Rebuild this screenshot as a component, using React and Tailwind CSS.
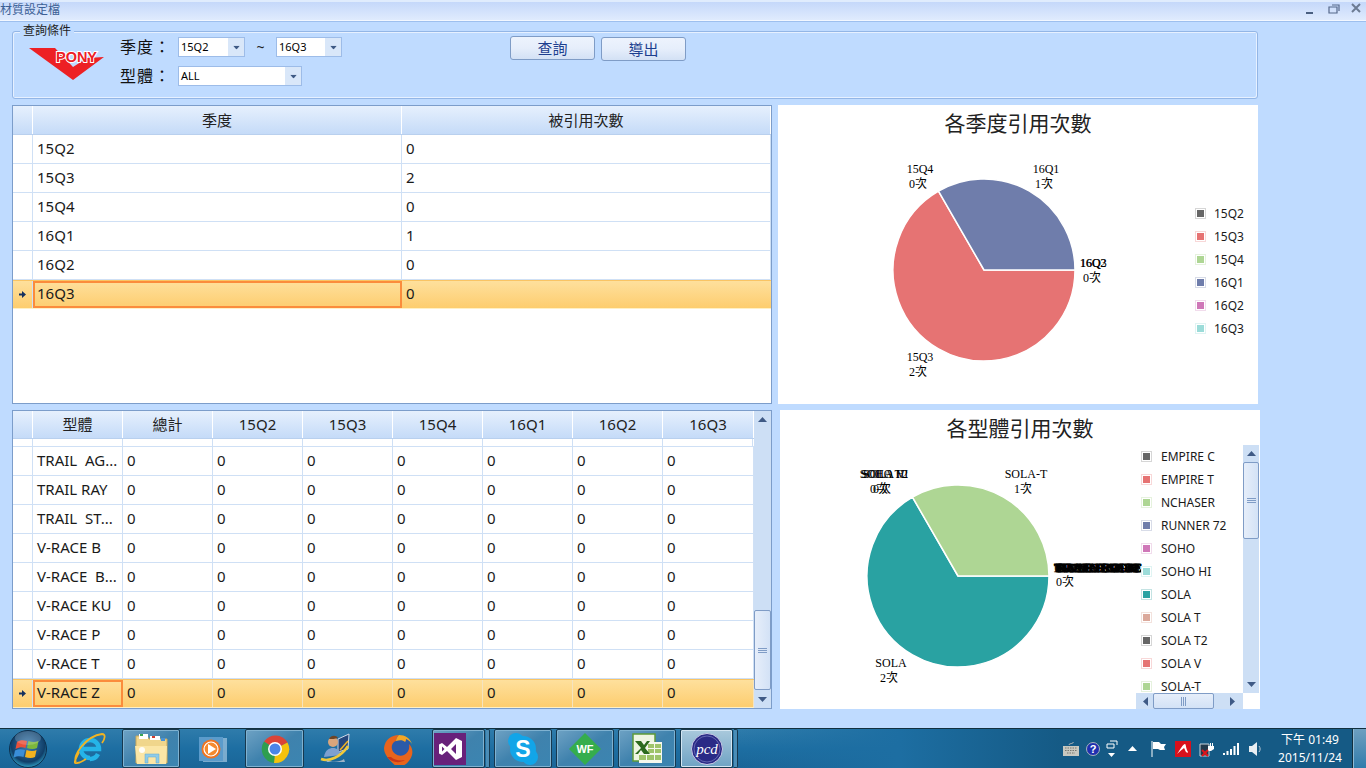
const QUARTERS = ["15Q2", "15Q3", "15Q4", "16Q1", "16Q2", "16Q3"];

const QUARTER_ROWS = [
  ["15Q2", 0],
  ["15Q3", 2],
  ["15Q4", 0],
  ["16Q1", 1],
  ["16Q2", 0],
];

const MODEL_ROWS = ["TRAIL  AG...", "TRAIL RAY", "TRAIL  ST...", "V-RACE B", "V-RACE  B...", "V-RACE KU", "V-RACE P", "V-RACE T"];

const SWATCHES = [
  { box: "border-[#d6d6d6]", fill: "bg-[#666666]" },
  { box: "border-[#f8d8d8]", fill: "bg-[#e67373]" },
  { box: "border-[#e6f2de]", fill: "bg-[#aed694]" },
  { box: "border-[#d8dce8]", fill: "bg-[#6f7dab]" },
  { box: "border-[#f1dcec]", fill: "bg-[#cf77b8]" },
  { box: "border-[#e0f4f3]", fill: "bg-[#9cdcd9]" },
  { box: "border-[#c4e3e3]", fill: "bg-[#29a2a2]" },
  { box: "border-[#f3e2dd]", fill: "bg-[#dba99b]" },
];

const MODEL_LEGEND = ["EMPIRE C", "EMPIRE T", "NCHASER", "RUNNER 72", "SOHO", "SOHO HI", "SOLA", "SOLA T", "SOLA T2", "SOLA V", "SOLA-T"];

const PILE_LABELS = ["EMPIRE C", "RUNNER 72", "NCHASER", "TRAIL AGILE", "TRAIL STORM", "V-RACE BLAZE", "ULTIMATE ZONE"];

const label = "font-['Liberation_Serif','Noto_Sans_CJK_TC',serif] text-[12px] fill-black";
const headerBg = "bg-gradient-to-b from-[#e6f0fd] to-[#c5dbf8]";
const selectedBg = "bg-gradient-to-b from-[#fee09c] to-[#fdcd6e]";

function ArrowDown({ className = "" }) {
  return (
    <svg width="9" height="5" viewBox="0 0 9 5" className={className}>
      <path d="M0 0h9L4.5 5z" fill="#3f5a85" />
    </svg>
  );
}

function Combo({ value, width }) {
  return (
    <div className={`flex h-[20px] items-center border border-[#9dbce8] bg-white ${width}`}>
      <span className="flex-1 pl-[2px] text-[11px] text-black">{value}</span>
      <span className="flex h-full w-[16px] items-center justify-center bg-[#d9e7f9]">
        <ArrowDown className="scale-75" />
      </span>
    </div>
  );
}

function FormLabel({ children }) {
  return <span className="w-[58px] text-[16px] leading-none tracking-[1px] text-[#111]">{children}</span>;
}

function PonyLogo() {
  return (
    <svg width="76" height="36" viewBox="0 0 76 36">
      <path d="M0 1h26l18 19 14-9 17-1-31 23z" fill="#ed2024" />
      <text x="27" y="15" textLength="41" lengthAdjust="spacingAndGlyphs" className="font-['Liberation_Sans',sans-serif] text-[15px] font-bold" fill="#ed2024" stroke="#fff" strokeWidth="2" paintOrder="stroke">
        PONY
      </text>
    </svg>
  );
}

function QueryButton({ children, className = "" }) {
  return (
    <button className={`h-[24px] w-[85px] rounded-[3px] border border-[#7f9cc6] bg-gradient-to-b from-[#edf3fd] via-[#e6eefb] to-[#d3e1f5] text-[15px] leading-none text-[#1d3f8f] ${className}`}>
      {children}
    </button>
  );
}

function QueryPanel() {
  return (
    <div className="relative flex h-[68px] w-[1246px] rounded-[3px] border border-[#93b6e6] shadow-[inset_-1px_-1px_0_#e6f0ff,inset_1px_1px_0_#e6f0ff]">
      <span className="absolute left-[7px] top-[-8px] bg-[#bfdbff] px-[3px] text-[12px] leading-[14px] text-[#222]">查詢條件</span>
      <div className="ml-[16px] mt-[15px] w-[91px]">
        <PonyLogo />
      </div>
      <div className="mt-[5px] flex w-[390px] flex-col gap-[9px]">
        <div className="flex items-center">
          <FormLabel>季度：</FormLabel>
          <Combo value="15Q2" width="w-[67px]" />
          <span className="w-[31px] text-center text-[14px] leading-none text-[#222]">~</span>
          <Combo value="16Q3" width="w-[66px]" />
        </div>
        <div className="flex items-center">
          <FormLabel>型體：</FormLabel>
          <Combo value="ALL" width="w-[124px]" />
        </div>
      </div>
      <div className="mt-[4px] flex items-start gap-[6px]">
        <QueryButton>查詢</QueryButton>
        <QueryButton className="mt-[1px]">導出</QueryButton>
      </div>
    </div>
  );
}

function RowMarker({ active }) {
  return (
    <div className={`flex h-full w-[20px] shrink-0 items-center justify-center border-r border-[#cfe0f5] ${active ? "" : "bg-white"}`}>
      {active && (
        <svg width="7" height="7" viewBox="0 0 7 7">
          <path d="M0 2.5h3V0l4 3.5L3 7V4.500H0z" fill="#15315f" />
        </svg>
      )}
    </div>
  );
}

function HeadCell({ children, className = "" }) {
  return (
    <div className={`flex h-full items-center justify-center border-r border-white text-[15px] text-[#222] ${headerBg} ${className}`}>
      {children}
    </div>
  );
}

function Cell({ children, className = "", active }) {
  const look = active ? "border-2 border-[#fb8c3c] pl-[2px]" : "border-r border-[#cfe0f5] pl-[4px]";
  return (
    <div className={`flex h-full items-center overflow-hidden whitespace-pre pb-[2px] text-[15px] text-[#1a1a1a] ${look} ${className}`}>
      {children}
    </div>
  );
}

function QuarterGrid() {
  return (
    <div className="h-[299px] w-[760px] border border-[#7c9dca] bg-white">
      <div className="flex h-[29px] border-b border-[#b9d0ee]">
        <HeadCell className="w-[20px]" />
        <HeadCell className="w-[369px]">季度</HeadCell>
        <HeadCell className="flex-1">被引用次數</HeadCell>
      </div>
      {QUARTER_ROWS.map(([q, n]) => (
        <div key={q} className="flex h-[29px] border-b border-[#cfe0f5]">
          <RowMarker />
          <Cell className="w-[369px]">{q}</Cell>
          <Cell className="flex-1">{n}</Cell>
        </div>
      ))}
      <div className={`flex h-[29px] border-b border-t border-b-[#fff0c4] border-t-[#f9c464] ${selectedBg}`}>
        <RowMarker active />
        <Cell active className="w-[369px]">16Q3</Cell>
        <Cell className="flex-1 border-r-0">0</Cell>
      </div>
    </div>
  );
}

function GripLines({ vertical }) {
  return (
    <svg width="9" height="9" viewBox="0 0 9 9">
      {vertical ? (
        <path d="M2.500 0v9M4.500 0v9M6.500 0v9" stroke="#7f9cc6" />
      ) : (
        <path d="M0 2.500h9M0 4.500h9M0 6.500h9" stroke="#7f9cc6" />
      )}
    </svg>
  );
}

function ModelGrid() {
  const quarterCols = QUARTERS.map((q, i) => (
    <HeadCell key={q} className={i === 5 ? "w-[91px]" : "w-[90px]"}>{q}</HeadCell>
  ));
  const zeroes = (active) => ["總計", ...QUARTERS].map((c, i) => (
    <Cell key={c} className={`${i === 6 ? "w-[91px]" : "w-[90px]"} ${active ? "border-r-[#f4e3c0]" : ""}`}>0</Cell>
  ));

  return (
    <div className="flex h-[299px] w-[760px] border border-[#7c9dca] bg-white">
      <div className="w-[741px]">
        <div className="flex h-[28px] border-b border-[#b9d0ee]">
          <HeadCell className="w-[20px]" />
          <HeadCell className="w-[90px]">型體</HeadCell>
          <HeadCell className="w-[90px]">總計</HeadCell>
          {quarterCols}
        </div>
        <div className="flex h-[8px] border-b border-[#cfe0f5]">
          <RowMarker />
          {[0, 1, 2, 3, 4, 5, 6, 7].map((i) => (
            <div key={i} className="w-[90px] border-r border-[#cfe0f5]" />
          ))}
        </div>
        {MODEL_ROWS.map((name) => (
          <div key={name} className="flex h-[29px] border-b border-[#cfe0f5]">
            <RowMarker />
            <Cell className="w-[90px]">{name}</Cell>
            {zeroes(false)}
          </div>
        ))}
        <div className={`flex h-[29px] border-b border-t border-b-[#fff0c4] border-t-[#f9c464] ${selectedBg}`}>
          <RowMarker active />
          <Cell active className="w-[90px]">V-RACE Z</Cell>
          {zeroes(true)}
        </div>
      </div>
      <div className="flex w-[17px] flex-col items-center bg-[#cddff5]">
        <div className="flex h-[16px] items-center">
          <ArrowDown className="rotate-180" />
        </div>
        <div className="flex-1" />
        <div className="flex h-[80px] w-[17px] items-center justify-center rounded-[2px] border border-[#7f9cc6] bg-gradient-to-r from-[#e6eefa] to-[#d3e2f6]">
          <GripLines />
        </div>
        <div className="flex h-[18px] items-center">
          <ArrowDown />
        </div>
      </div>
    </div>
  );
}

function Legend({ items, className = "", textGap = "ml-[8px]" }) {
  return (
    <div className={className}>
      {items.map((name, i) => {
        const s = SWATCHES[i % SWATCHES.length];
        return (
          <div key={name} className="flex h-[23px] items-center">
            <span className={`flex h-[11px] w-[11px] shrink-0 items-center justify-center border bg-white ${s.box}`}>
              <span className={`h-[7px] w-[7px] ${s.fill}`} />
            </span>
            <span className={`whitespace-nowrap text-[12px] text-[#1a1a1a] ${textGap}`}>{name}</span>
          </div>
        );
      })}
    </div>
  );
}

function Pie({ cx, cy, big, small }) {
  return (
    <g stroke="#fff" strokeWidth="1.500">
      <path d={`M${cx} ${cy}L${cx + 91} ${cy}A91 91 0 1 1 ${cx - 45.500} ${cy - 78.800}Z`} fill={big} />
      <path d={`M${cx} ${cy}L${cx - 45.500} ${cy - 78.800}A91 91 0 0 1 ${cx + 91} ${cy}Z`} fill={small} />
    </g>
  );
}

function QuarterChart() {
  return (
    <div className="ml-[6px] h-[299px] w-[480px] bg-white">
      <div className="flex h-[35px] items-center justify-center pt-[2px] text-[21px] text-[#222]">各季度引用次數</div>
      <div className="flex">
        <svg width="400" height="264" viewBox="0 0 400 264">
          <Pie cx={206} cy={130} big="#e67373" small="#6f7dab" />
          <g textAnchor="middle" className={label}>
            <text x="142" y="33">15Q4</text>
            <text x="140" y="48">0次</text>
            <text x="268" y="33">16Q1</text>
            <text x="266" y="48">1次</text>
            <text x="315" y="127">16Q2</text>
            <text x="315.500" y="127">16Q3</text>
            <text x="314" y="142">0次</text>
            <text x="142" y="221">15Q3</text>
            <text x="140" y="236">2次</text>
          </g>
        </svg>
        <Legend items={QUARTERS} className="pl-[17px] pt-[62px]" />
      </div>
    </div>
  );
}

function ModelChart() {
  return (
    <div className="ml-[8px] h-[299px] w-[480px] bg-white">
      <div className="flex h-[35px] items-center justify-center pt-[2px] text-[21px] text-[#222]">各型體引用次數</div>
      <div className="flex">
        <svg width="356" height="264" viewBox="0 0 356 264" className="overflow-visible">
          <Pie cx={178} cy={131} big="#29a2a2" small="#aed694" />
          <g textAnchor="middle" className={label}>
            <text x="104" y="33">SOHO HI</text>
            <text x="104" y="33">SOLA V</text>
            <text x="104.500" y="33">SOLA T2</text>
            <text x="99" y="48">0次</text>
            <text x="102" y="48">0次</text>
            <text x="246" y="33">SOLA-T</text>
            <text x="243" y="48">1次</text>
            <text x="111" y="222">SOLA</text>
            <text x="109" y="237">2次</text>
            {PILE_LABELS.map((name, i) => (
              <text key={name} x={318} y="127" textLength={88 - (i % 3) * 4} lengthAdjust="spacingAndGlyphs" stroke="#000" strokeWidth="0.500">{name}</text>
            ))}
            <text x="285" y="141">0次</text>
          </g>
        </svg>
        <div className="w-[107px]">
          <Legend items={MODEL_LEGEND} className="h-[248px] overflow-hidden pl-[5px]" textGap="ml-[9px]" />
          <div className="flex h-[16px] items-center bg-[#cddff5]">
            <ArrowDown className="ml-[5px] rotate-90" />
            <div className="ml-[3px] flex h-[16px] w-[61px] items-center justify-center rounded-[2px] border border-[#7f9cc6] bg-gradient-to-b from-[#e6eefa] to-[#d3e2f6]">
              <GripLines vertical />
            </div>
            <ArrowDown className="ml-[14px] -rotate-90" />
          </div>
        </div>
        <div className="flex h-[248px] w-[16px] flex-col items-center bg-[#cddff5]">
          <div className="flex h-[17px] items-center">
            <ArrowDown className="rotate-180" />
          </div>
          <div className="flex h-[77px] w-[16px] items-center justify-center rounded-[2px] border border-[#7f9cc6] bg-gradient-to-r from-[#e6eefa] to-[#d3e2f6]">
            <GripLines />
          </div>
          <div className="flex-1" />
          <div className="flex h-[18px] items-center">
            <ArrowDown />
          </div>
        </div>
      </div>
    </div>
  );
}

function TitleBar() {
  return (
    <div className="flex h-[21px] items-center border-b border-t-2 border-b-[#f2f7ff] border-t-[#e0ecfd] bg-gradient-to-b from-[#c5d8fa] to-[#e0ebfd] shadow-[0_1px_0_#9dbfee]">
      <span className="flex-1 pb-[2px] text-[12px] leading-none text-[#3b5f95]">材質設定檔</span>
      <svg width="66" height="14" viewBox="0 0 66 14" className="mb-[3px]">
        <path d="M6 9h7v2H6z" fill="#4a5f80" />
        <path d="M29 4h8v6h-8zM32 2h7v6" fill="none" stroke="#55688a" strokeWidth="1.200" />
        <path d="M52 1l8 8M60 1l-8 8" stroke="#6c7b92" strokeWidth="2" />
      </svg>
    </div>
  );
}

function Orb() {
  return (
    <svg width="40" height="40" viewBox="0 0 40 40">
      <defs>
        <radialGradient id="orb" cx="0.5" cy="0.4" r="0.6">
          <stop offset="0" stopColor="#3f7fb2" />
          <stop offset="0.75" stopColor="#103f69" />
          <stop offset="1" stopColor="#2f9ec4" />
        </radialGradient>
      </defs>
      <circle cx="20" cy="20" r="18.500" fill="url(#orb)" stroke="#0d2f4d" />
      <path d="M9 13c3-2 6-2 10-1l-1.500 7c-3-1-6-1-10 1z" fill="#e8503a" />
      <path d="M20.500 12c3 1 6 1.500 10 0l-1.500 7c-3 1.500-7 1-10 0z" fill="#7cb83c" />
      <path d="M7 21.500c3-1.500 7-1.500 10 -.5l-1.500 7c-3-1-6-1-10 .5z" fill="#3a8ed8" />
      <path d="M18.500 21c3 1 7 1.500 10 0l-1.500 7c-3 1.500-7 1-10 0z" fill="#f2b21f" />
      <ellipse cx="20" cy="9" rx="13" ry="7" fill="#fff" opacity="0.18" />
    </svg>
  );
}

function IeIcon() {
  return (
    <svg width="34" height="34" viewBox="0 0 34 34">
      <path d="M18 26a9 9 0 1 1 9-9H11M26 22a9 9 0 0 1-8 5" fill="none" stroke="#25b4e8" strokeWidth="4.500" />
      <path d="M4 30C0 24 14 4 30 2c4 0 3 5 0 9M7 20C3 28 1 32 5 31c3 0 6-2 9-4" fill="none" stroke="#f2b322" strokeWidth="1.800" />
    </svg>
  );
}

function FolderIcon() {
  return (
    <svg width="34" height="32" viewBox="0 0 34 32">
      <path d="M2 3h11l2 3h18v24H2z" fill="#f0d68c" stroke="#c9a95c" />
      <path d="M5 1h9v5H5z" fill="#fff" />
      <path d="M6 1h3v2H6z" fill="#3aa655" />
      <path d="M16 3h10v4H16z" fill="#fff" />
      <path d="M18 3h3v2h-3z" fill="#d13d2f" />
      <path d="M27 5h4v3h-4z" fill="#4a93d8" />
      <path d="M1 13h32l-1 18H3z" fill="#fbe6a6" />
      <path d="M11 21h14v9h-3v-6h-8v6h-3z" fill="#8ecbe8" stroke="#5ca5cf" strokeWidth="0.500" />
      <circle cx="8" cy="17" r="3" fill="#fff" opacity="0.9" />
    </svg>
  );
}

function MediaIcon() {
  return (
    <svg width="28" height="26" viewBox="0 0 28 26">
      <path d="M4 2h24v24H4z" fill="#a4c8e2" opacity="0.7" />
      <path d="M0 1h24v24H0z" fill="#5b9bcb" />
      <circle cx="12" cy="13" r="9.500" fill="#ee7421" />
      <circle cx="12" cy="13" r="7" fill="#f58a2e" stroke="#fff" strokeWidth="1.200" />
      <path d="M9 8l8 5-8 5z" fill="#fff" />
    </svg>
  );
}

function ChromeIcon() {
  return (
    <svg width="30" height="30" viewBox="0 0 30 30">
      <path d="M15 15L4 7.500A14 14 0 0 1 27.500 8.500z" fill="#db4437" />
      <path d="M15 15L27.500 8.500A14 14 0 0 1 14 29z" fill="#f4c20d" />
      <path d="M15 15L14 29A14 14 0 0 1 4 7.500z" fill="#2e9e4f" />
      <circle cx="15" cy="15" r="7" fill="#fff" />
      <circle cx="15" cy="15" r="5.500" fill="#4a85e8" />
    </svg>
  );
}

function AdminIcon() {
  return (
    <svg width="32" height="32" viewBox="0 0 32 32">
      <path d="M18 6l11-5-1 15-10 3z" fill="#25477d" stroke="#cfd9e8" />
      <path d="M20 17l8-9" stroke="#f2b322" strokeWidth="1.500" />
      <circle cx="13" cy="9" r="5" fill="#d9a57c" />
      <path d="M9 6c2-4 7-4 9-1-3 1-6 1-9 1z" fill="#6d4425" />
      <path d="M4 24c1-7 5-9 9-9s7 2 8 7z" fill="#7ea0cf" />
      <path d="M1 26c8 3 20-2 27-13" fill="none" stroke="#f0c93a" strokeWidth="2.500" />
      <path d="M6 27c6 3 14 2 18-1l1 3H7z" fill="#9fb3c6" />
    </svg>
  );
}

function FirefoxIcon() {
  return (
    <svg width="32" height="32" viewBox="0 0 32 32">
      <circle cx="17" cy="15" r="12" fill="#2b5aa8" />
      <path d="M2 15C3 7 9 2 17 2c-2 2-3 4-3 6-3 1-5 4-4 8 1 5 7 8 12 6 4-2 6-6 5-11 3 3 4 7 3 11-2 7-8 12-15 12C8 28 2 22 2 15z" fill="#e8641c" />
      <path d="M17 2c6 0 11 3 13 9-2-3-4-4-6-5 0 1 0 2-1 3-2-2-5-2-9-1 0-2 1-4 3-6z" fill="#f6a724" />
      <path d="M5 24c4 5 12 7 18 3-5 1-11 0-14-3z" fill="#c9361a" />
    </svg>
  );
}

function VsIcon() {
  return (
    <svg width="32" height="32" viewBox="0 0 32 32">
      <path d="M0 0h32v32H0z" fill="#68217a" />
      <path d="M22 5l6 3v16l-6 3-9-9-5 4-3-1.500V11.500L8 10l5 4zM8 13.500v5l2.500-2.500zM22 11l-5 5 5 5z" fill="#fff" fillRule="evenodd" />
    </svg>
  );
}

function SkypeIcon() {
  return (
    <svg width="32" height="32" viewBox="0 0 32 32">
      <circle cx="9" cy="8" r="8" fill="#12a5e8" />
      <circle cx="23" cy="24" r="8" fill="#12a5e8" />
      <circle cx="16" cy="16" r="13" fill="#12a5e8" />
      <text x="16" y="24" textAnchor="middle" className="font-['Liberation_Sans',sans-serif] text-[23px] font-bold" fill="#fff">S</text>
    </svg>
  );
}

function WfIcon() {
  return (
    <svg width="32" height="32" viewBox="0 0 32 32">
      <path d="M16 0l16 16-16 16L0 16z" fill="#35ad4d" />
      <text x="16" y="20" textAnchor="middle" className="font-['Liberation_Sans',sans-serif] text-[11px] font-bold" fill="#fff">WF</text>
    </svg>
  );
}

function ExcelIcon() {
  return (
    <svg width="32" height="32" viewBox="0 0 32 32">
      <path d="M2 1h22v27H2z" fill="#eef5e2" stroke="#5d9a3a" strokeWidth="1.500" />
      <path d="M8 9h23v21H8z" fill="#f5f8ee" />
      <path d="M17 11h6v4h-6zM24 11h6v4h-6zM17 16h6v4h-6zM24 16h6v4h-6zM8 22h7v5H8zM16 22h7v5h-7zM24 22h6v5h-6z" fill="#9fc46a" />
      <path d="M4 8h6l3 4 3-4h3l-5 7 5 6h-6l-3-4-3 4H4l6-6z" fill="#2c6a1e" />
    </svg>
  );
}

function PcdIcon() {
  return (
    <svg width="32" height="32" viewBox="0 0 32 32">
      <circle cx="16" cy="16" r="15.500" fill="#2a2a86" stroke="#c9cbe6" />
      <circle cx="16" cy="16" r="13" fill="none" stroke="#8c8fcf" strokeWidth="0.600" />
      <text x="16" y="21" textAnchor="middle" className="font-['Liberation_Serif',serif] text-[15px] italic" fill="#fff">pcd</text>
    </svg>
  );
}

function TaskSlot({ children, open, lit, className = "" }) {
  const look = lit
    ? "border border-[#16384f] bg-gradient-to-b from-[#a9c9dc] to-[#6fa3c4] shadow-[inset_0_0_0_1px_#d3e6f2]"
    : open
      ? "border border-[#16384f] bg-gradient-to-br from-[#6ea2c4] via-[#3f82ad] to-[#3b85b1] shadow-[inset_0_0_0_1px_#7fb2d1]"
      : "";
  return <div className={`flex h-[39px] shrink-0 items-center justify-center rounded-[2px] ${look} ${className}`}>{children}</div>;
}

function GroupEdge() {
  return <div className="ml-[1px] h-[39px] w-[4px] rounded-r-[2px] border border-l-0 border-[#16384f] bg-[#4b8db6]" />;
}

function Taskbar() {
  return (
    <div className="flex h-[40px] border-t border-[#12303f] bg-gradient-to-b from-[#2f7cab] via-[#1d6ea2] to-[#1a6597] pl-[8px]">
      <div className="flex w-[114px] items-center">
        <div className="w-[50px]"><Orb /></div>
        <div className="ml-[14px]"><IeIcon /></div>
      </div>
      <TaskSlot open className="w-[58px]"><FolderIcon /></TaskSlot>
      <TaskSlot className="ml-[4px] w-[57px]"><MediaIcon /></TaskSlot>
      <TaskSlot open className="ml-[4px] w-[59px]"><ChromeIcon /></TaskSlot>
      <TaskSlot className="ml-[4px] w-[56px]"><AdminIcon /></TaskSlot>
      <TaskSlot className="w-[68px]"><FirefoxIcon /></TaskSlot>
      <TaskSlot open className="w-[53px] justify-start pl-[1px]"><VsIcon /></TaskSlot>
      <GroupEdge />
      <TaskSlot open className="ml-[4px] w-[58px]"><SkypeIcon /></TaskSlot>
      <TaskSlot open className="ml-[4px] w-[58px]"><WfIcon /></TaskSlot>
      <TaskSlot open className="ml-[4px] w-[58px]"><ExcelIcon /></TaskSlot>
      <TaskSlot lit className="ml-[4px] w-[53px]"><PcdIcon /></TaskSlot>
      <GroupEdge />
      <div className="flex-1 bg-gradient-to-r from-transparent via-[#1d6ea2] to-[#155a85]" />
      <Tray />
    </div>
  );
}

function Tray() {
  return (
    <div className="flex items-center bg-[#155a85]">
      <svg width="16" height="14" viewBox="0 0 16 14" className="ml-[2px]">
        <path d="M6 3C6 1 11 2 10 0" fill="none" stroke="#bbb" />
        <path d="M0 4h16v10H0z" fill="#c8c8c0" />
        <path d="M2 6h12M2 8.500h12M4 11h8" stroke="#77776f" strokeDasharray="1.500 1" />
      </svg>
      <svg width="14" height="14" viewBox="0 0 14 14" className="ml-[7px]">
        <circle cx="7" cy="7" r="6.500" fill="#1f2fb0" stroke="#a8b2bc" />
        <text x="7" y="11" textAnchor="middle" className="font-['Liberation_Sans',sans-serif] text-[11px] font-bold" fill="#fff">?</text>
      </svg>
      <svg width="12" height="18" viewBox="0 0 12 18" className="ml-[6px]">
        <path d="M1 4h7v4H1zM4 1h7v4" fill="none" stroke="#fff" />
        <path d="M2 13h7l-3.500 4z" fill="#fff" />
      </svg>
      <svg width="9" height="5" viewBox="0 0 9 5" className="ml-[10px]">
        <path d="M0 5h9L4.500 0z" fill="#fff" />
      </svg>
      <svg width="16" height="16" viewBox="0 0 16 16" className="ml-[14px]">
        <path d="M1 0v16" stroke="#fff" />
        <path d="M2 1h6l2 2h5l-2 3 1 3H9L7 8H2z" fill="#fff" />
      </svg>
      <svg width="16" height="16" viewBox="0 0 16 16" className="ml-[8px]">
        <path d="M0 0h16v16H0z" fill="#d8101c" />
        <path d="M2 13C5 9 8 3 10 3c1 0 1 5 3 8 0 1-1 1-2 0-1-1-1-3-2-4-1 1-4 3-7 6z" fill="#fff" />
      </svg>
      <svg width="16" height="16" viewBox="0 0 16 16" className="ml-[8px]">
        <path d="M1 3h9v12H1z" fill="#22394c" stroke="#c9d3db" />
        <path d="M9 5h2V2h1v3h1V2h1v3h1v3l-3 2H9z" fill="#fff" />
        <path d="M3 9l6 6M9 9l-6 6" stroke="#e0141c" strokeWidth="2" />
      </svg>
      <svg width="16" height="12" viewBox="0 0 16 12" className="ml-[8px]">
        <path d="M0 10h2v2H0zM3.500 8h2v4h-2zM7 6h2v6H7zM10.500 3h2v9h-2zM14 0h2v12h-2z" fill="#fff" />
      </svg>
      <svg width="13" height="14" viewBox="0 0 13 14" className="ml-[10px]">
        <path d="M0 4h3l5-4v14l-5-4H0z" fill="#e8eef2" />
        <path d="M10 4c1.500 2 1.500 4 0 6" fill="none" stroke="#b8c8d4" />
      </svg>
      <div className="ml-[9px] w-[78px] text-center text-[12px] leading-[18px] text-white">
        <div>下午 01:49</div>
        <div>2015/11/24</div>
      </div>
      <div className="ml-[3px] h-full w-[14px] border-l border-[#12303f] bg-gradient-to-b from-[#6d9fc0] to-[#2f7cab] shadow-[inset_1px_0_0_#8fbad4]" />
    </div>
  );
}

export default function App() {
  return (
    <div className="flex h-[768px] w-[1366px] flex-col overflow-hidden bg-[#bfdbff] font-['Noto_Sans','Noto_Sans_CJK_TC',sans-serif]">
      <TitleBar />
      <main className="flex-1 pl-[12px] pt-[10px]">
        <QueryPanel />
        <div className="mt-[6px] flex">
          <QuarterGrid />
          <QuarterChart />
        </div>
        <div className="mt-[6px] flex">
          <ModelGrid />
          <ModelChart />
        </div>
      </main>
      <Taskbar />
    </div>
  );
}
